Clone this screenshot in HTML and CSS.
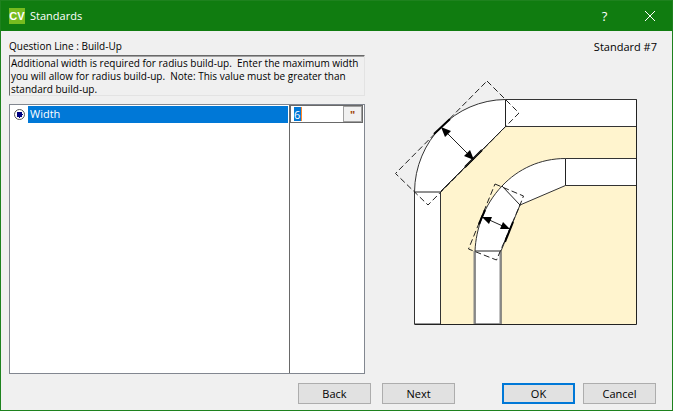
FILE: index.html
```html
<!DOCTYPE html>
<html lang="en">
<head>
<meta charset="utf-8">
<title>Standards</title>
<link rel="stylesheet" href="styles.css">
</head>
<body>
<form class="window">
  <header class="titlebar">
    <span class="logo">CV</span>
    <h1 class="title">Standards</h1>
    <button class="caption" type="button" aria-label="Help">?</button>
    <button class="caption" type="button" aria-label="Close">
      <svg width="10" height="10" viewBox="0 0 10 10"><path d="M0 0L10 10M10 0L0 10" stroke="#fff" fill="none"/></svg>
    </button>
  </header>
  <div class="heading">
    <span>Question Line : Build-Up</span>
    <span class="standard">Standard #7</span>
  </div>
  <main class="content">
    <section class="question">
      <p class="description">Additional width is required for radius build-up.&nbsp; Enter the maximum width<br>you will allow for radius build-up.&nbsp; Note: This value must be greater than<br>standard build-up.</p>
      <div class="list">
        <div class="names">
          <div class="option">
            <input class="radio" type="radio" name="line" id="width-line" checked>
            <label class="option-name" for="width-line">Width</label>
          </div>
        </div>
        <div class="values">
          <div class="field">
            <div class="entry"><input class="value" type="text" value="6" aria-label="Width value"></div>
            <button class="unit" type="button">"</button>
          </div>
        </div>
      </div>
    </section>
    <svg class="diagram" viewBox="365 55 292 319" role="img" aria-label="Radius build-up">
      <path class="fill-top" d="M440.500 324V192L506 126.500H636.500V324Z"/>
      <path class="part" d="M414.500 324V192C415 141 455 100 505.500 99.500H636.500V126.500H505.500L440.500 192V324Z"/>
      <path class="part" d="M475 324V251C476 229 484 205 502 186C518 169 540 158.500 565.500 158.500H636.500V185.500H565.500L520 205L501 251V324Z"/>
      <path class="line" d="M414.500 324.500H636.500V99.500M414.500 192H440.500M505.500 99.500V126.500M565.500 158.500V185.500M475 251H501M502 186L520 205"/>
      <path class="edge" d="M474.500 251V324M500.500 251V324"/>
      <path class="dash" d="M487 81L519 113L428 205L395.500 173.500Z"/>
      <path class="dash" d="M495 184L523.500 196L520 205L496.500 260L468.500 249Z"/>
      <path class="bold" d="M434 134L450 119M465 167L482 150M479 224L485 210M505 242L513 222"/>
      <path class="line" d="M441 191L505 127M445 131L470 156M485 218L507 228"/>
      <path d="M441 127L451 131L445 137ZM474 160L464 156L470 150ZM482 217L492 217L489 224ZM510 229L500 229L503 222Z"/>
    </svg>
  </main>
  <footer class="buttons">
    <button class="button" type="button">Back</button>
    <button class="button" type="button">Next</button>
    <button class="button primary" type="submit">OK</button>
    <button class="button cancel" type="button">Cancel</button>
  </footer>
</form>
</body>
</html>
```
FILE: styles.css
```css
* { box-sizing: border-box; }

body {
  margin: 0;
  font: 11px/13px Tahoma, "Open Sans", sans-serif;
  color: #000;
}

button, input { font: inherit; color: inherit; }

.window {
  display: flex;
  flex-direction: column;
  min-height: 100vh;
  border: 1px solid #1e821e;
  background: #f0f0f0;
}

.titlebar {
  display: flex;
  align-items: center;
  height: 30px;
  padding-left: 8px;
  background: #107c10;
  color: #fff;
}

.logo {
  width: 16px;
  height: 16px;
  background: #77bc1f;
  font: bold 11px/16px "Liberation Sans", sans-serif;
  text-align: center;
}

.title {
  flex: 1;
  margin: 0 0 0 5px;
  font: 11px/16px "Open Sans", sans-serif;
}

.caption {
  width: 45px;
  height: 30px;
  padding: 0;
  border: 0;
  background: none;
  font: 13px/16px "Open Sans", sans-serif;
}

.heading {
  display: flex;
  justify-content: space-between;
  padding: 9px 15px 2px 8px;
  font-size: 10px;
}

.standard { font-size: 11px; }

.content {
  flex: 1;
  display: grid;
  grid-template-columns: minmax(0, 356fr) minmax(0, 292fr);
  padding: 0 15px 0 8px;
}

.question {
  display: flex;
  flex-direction: column;
  gap: 8px;
}

.description {
  height: 41px;
  margin: 0;
  padding: 1px;
  border: 1px solid;
  border-color: #696969 #e3e3e3 #e3e3e3 #696969;
  box-shadow: inset 0 1px #a0a0a0;
  font-size: 10px;
  white-space: nowrap;
}

.list {
  flex: 1;
  display: grid;
  grid-template-columns: 279fr 75fr;
  border: 1px solid #828790;
  background: #fff;
}

.names { padding-top: 1px; }

.option {
  display: flex;
  align-items: center;
  height: 17px;
}

.radio {
  appearance: none;
  width: 11px;
  height: 11px;
  margin: 0 3px 0 4px;
  border: 1px solid #555;
  border-radius: 50%;
  background: radial-gradient(circle, #000080 0 3px, #fff 3px);
}

.option-name {
  flex: 1;
  height: 17px;
  margin-right: 1px;
  padding: 1px 2px;
  background: #0078d7;
  color: #fff;
}

.values { border-left: 1px solid #696969; }

.field {
  display: flex;
  height: 18px;
  margin-right: 1px;
  border: 1px solid #696969;
}

.entry {
  flex: 1;
  min-width: 0;
  padding: 1px 3px;
}

.value {
  display: block;
  width: 8px;
  height: 14px;
  padding: 0;
  border: 0;
  border-right: 1px solid #ff8728;
  outline: 0;
  background: #0078d7;
  color: #fff;
}

.unit {
  width: 19px;
  padding: 0;
  border: 1px solid #a0a0a0;
  background: #f0f0f0;
  color: #a04000;
  font-weight: bold;
}

.diagram {
  display: block;
  width: 100%;
}

.fill-top { fill: #fff4ce; }
.part { fill: #fff; stroke: #333; }
.line { fill: none; stroke: #222; }
.edge { fill: none; stroke: #888; stroke-width: 2; }
.dash { fill: none; stroke: #222; stroke-dasharray: 6 3; }
.bold { fill: none; stroke: #000; stroke-width: 2; }

.buttons {
  display: flex;
  justify-content: flex-end;
  padding: 9px 16px 6px;
}

.button {
  width: 73px;
  height: 21px;
  margin-left: 11px;
  padding: 0;
  border: 1px solid #adadad;
  background: #e1e1e1;
}

.primary {
  margin-left: 47px;
  border: 2px solid #0078d7;
}

.cancel { margin-left: 8px; }
```
